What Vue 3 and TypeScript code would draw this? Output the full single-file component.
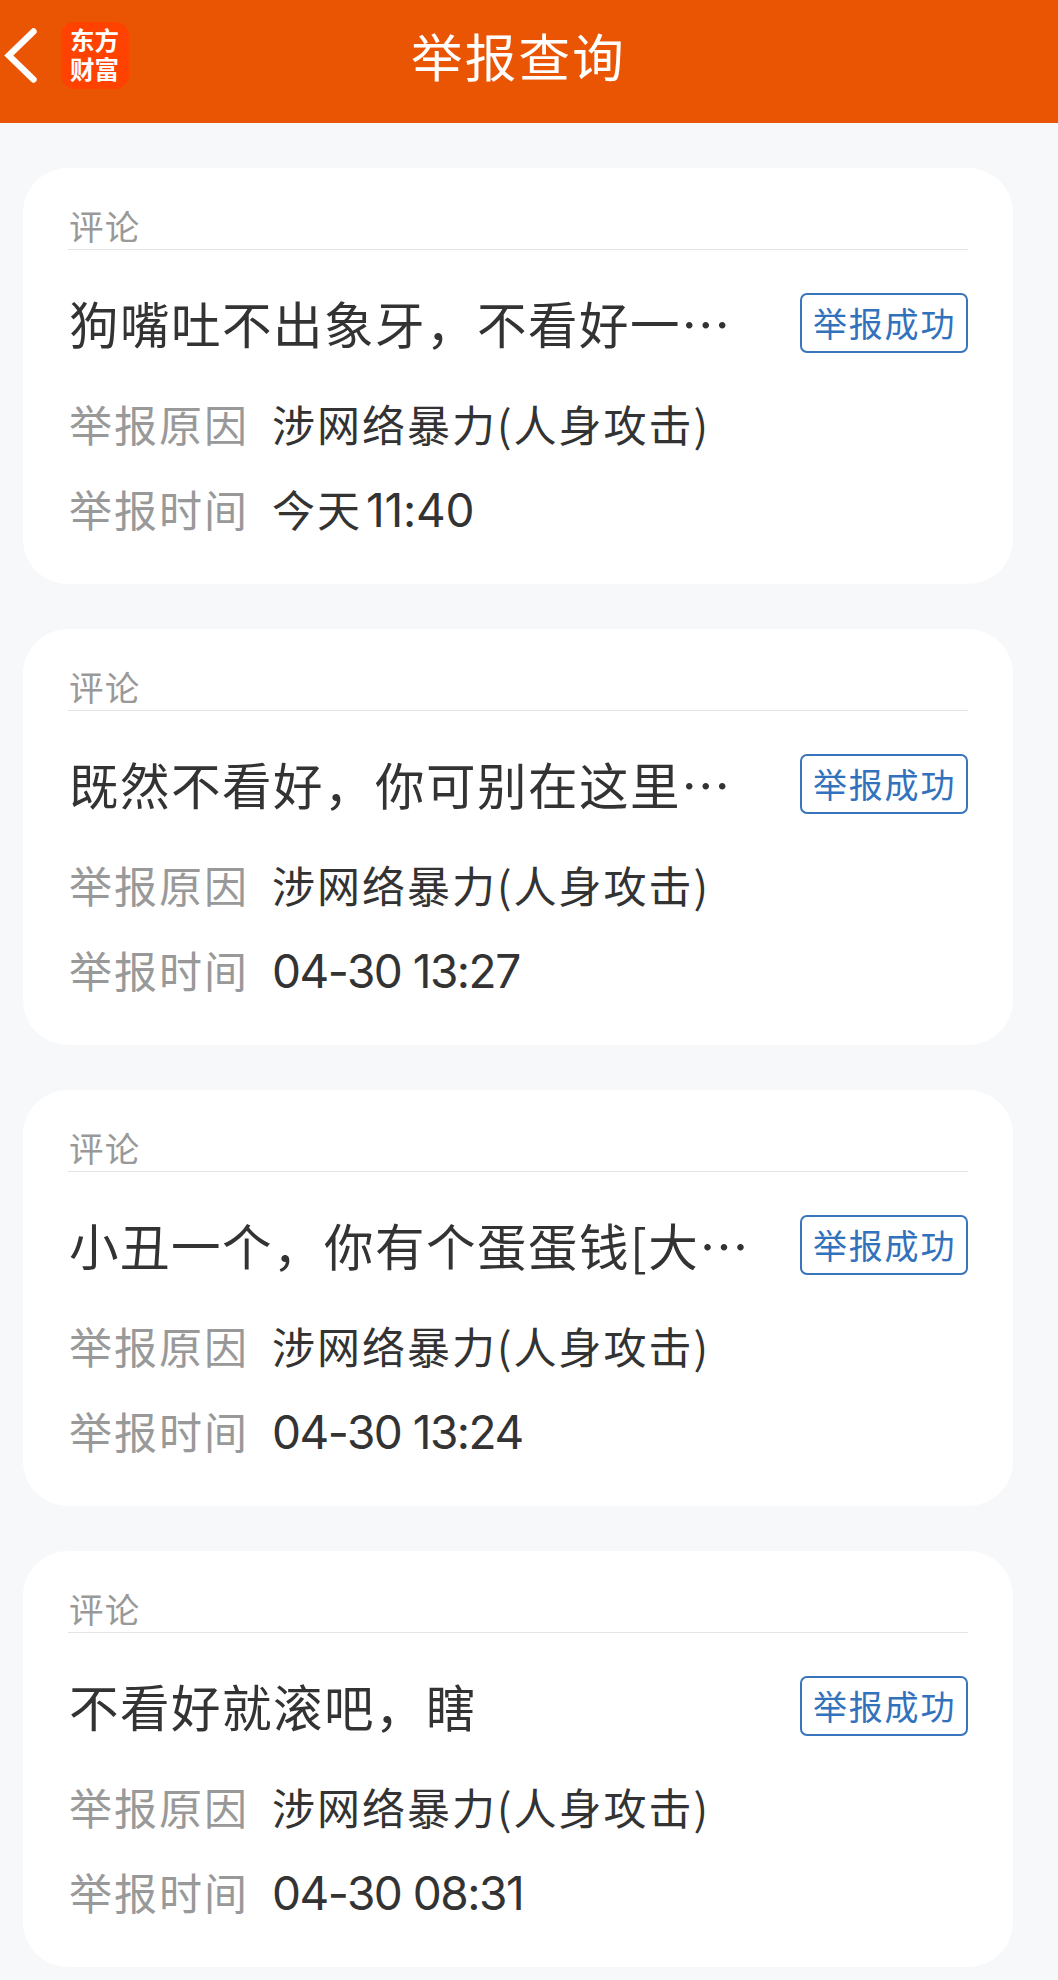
<script setup lang="ts">
interface Report {
  id: number
  kind: string
  content: string
  status: string
  reason: string
  day?: string
  time: string
}

const reports: Report[] = [
  { id: 1, kind: '评论', content: '狗嘴吐不出象牙，不看好一…', status: '举报成功', reason: '涉网络暴力(人身攻击)', day: '今天', time: '11:40' },
  { id: 2, kind: '评论', content: '既然不看好，你可别在这里…', status: '举报成功', reason: '涉网络暴力(人身攻击)', time: '04-30 13:27' },
  { id: 3, kind: '评论', content: '小丑一个，你有个蛋蛋钱[大…', status: '举报成功', reason: '涉网络暴力(人身攻击)', time: '04-30 13:24' },
  { id: 4, kind: '评论', content: '不看好就滚吧，瞎', status: '举报成功', reason: '涉网络暴力(人身攻击)', time: '04-30 08:31' },
]
</script>

<template>
  <div class="page" lang="zh-CN">
    <header class="bar">
      <div class="nav">
        <svg class="back" width="40" height="62" viewBox="0 0 40 62" fill="none">
          <path d="M33.5 7.5 L8.8 31.5 L33.5 55.5" stroke="#fff" stroke-width="6.4" stroke-linecap="round" />
        </svg>
        <div class="logo">东方财富</div>
      </div>
      <h1 class="heading">举报查询</h1>
      <div class="side"></div>
    </header>
    <main class="list">
      <article v-for="r in reports" :key="r.id" class="card">
        <div class="kind">{{ r.kind }}</div>
        <div class="summary">
          <span class="content">{{ r.content }}</span>
          <span class="status">{{ r.status }}</span>
        </div>
        <dl class="details">
          <div class="row"><dt>举报原因</dt><dd>{{ r.reason }}</dd></div>
          <div class="row">
            <dt>举报时间</dt>
            <dd><span v-if="r.day" class="day">{{ r.day }}</span><span class="time" :class="{ short: r.day }">{{ r.time }}</span></dd>
          </div>
        </dl>
      </article>
    </main>
  </div>
</template>

<style>
body {
  margin: 0;
  background: #f7f8fa;
}
</style>

<style scoped>
.page {
  box-sizing: border-box;
  min-height: 1980px;
  background: #f7f8fa;
  color: #333;
  font-family: "Noto Sans CJK SC", sans-serif;
}
.bar {
  box-sizing: border-box;
  display: flex;
  height: 123px;
  padding-right: 22px;
  background: #ea5504;
  color: #fff;
}
.nav,
.side {
  flex: 1 1 0;
}
.nav {
  display: flex;
  align-items: flex-start;
  padding-top: 22px;
}
.back {
  margin-top: 2px;
  margin-right: 21px;
}
.logo {
  box-sizing: border-box;
  width: 68px;
  height: 67px;
  padding: 3px 8px 0 9px;
  border-radius: 14px;
  background: #ff4200;
  font-size: 24.5px;
  font-weight: 700;
  line-height: 29px;
  word-break: break-all;
}
.heading {
  margin: 0;
  padding-top: 15px;
  font-size: 51.5px;
  font-weight: 400;
  letter-spacing: 2.3px;
  text-indent: 1px;
  line-height: 80px;
}
.list {
  display: flex;
  flex-direction: column;
  gap: 45px;
  padding: 45px 45px 14px 23px;
}
.card {
  box-sizing: border-box;
  height: 416px;
  padding: 33px 45px 0;
  border-radius: 45px;
  background: #fff;
}
.kind {
  padding-left: 1px;
  border-bottom: 1px solid #e4e4e4;
  color: #999;
  font-size: 34.5px;
  letter-spacing: 1.3px;
  line-height: 48px;
}
.summary {
  display: flex;
  align-items: center;
  justify-content: space-between;
  height: 60px;
  margin-top: 43px;
}
.content {
  padding-left: 1px;
  font-size: 49.5px;
  letter-spacing: 1.5px;
  line-height: 60px;
  white-space: nowrap;
}
.status {
  box-sizing: border-box;
  width: 168px;
  height: 60px;
  padding-left: 11px;
  border: 2px solid #3875bd;
  border-radius: 7px;
  color: #3272bd;
  font-size: 34px;
  letter-spacing: 1.8px;
  line-height: 56px;
  white-space: nowrap;
}
.details {
  margin: 28px 0 0;
}
.row {
  display: flex;
  align-items: baseline;
  gap: 23px;
  height: 85px;
  font-size: 43px;
  letter-spacing: 2px;
  line-height: 85px;
}
dt {
  padding-left: 1px;
  color: #999;
}
dd {
  margin: 0;
}
.day {
  margin-right: 4px;
}
.time {
  font-family: Inter, "Noto Sans CJK SC", sans-serif;
  font-size: 46px;
  letter-spacing: -1.5px;
}
.short {
  letter-spacing: -0.2px;
}
</style>
